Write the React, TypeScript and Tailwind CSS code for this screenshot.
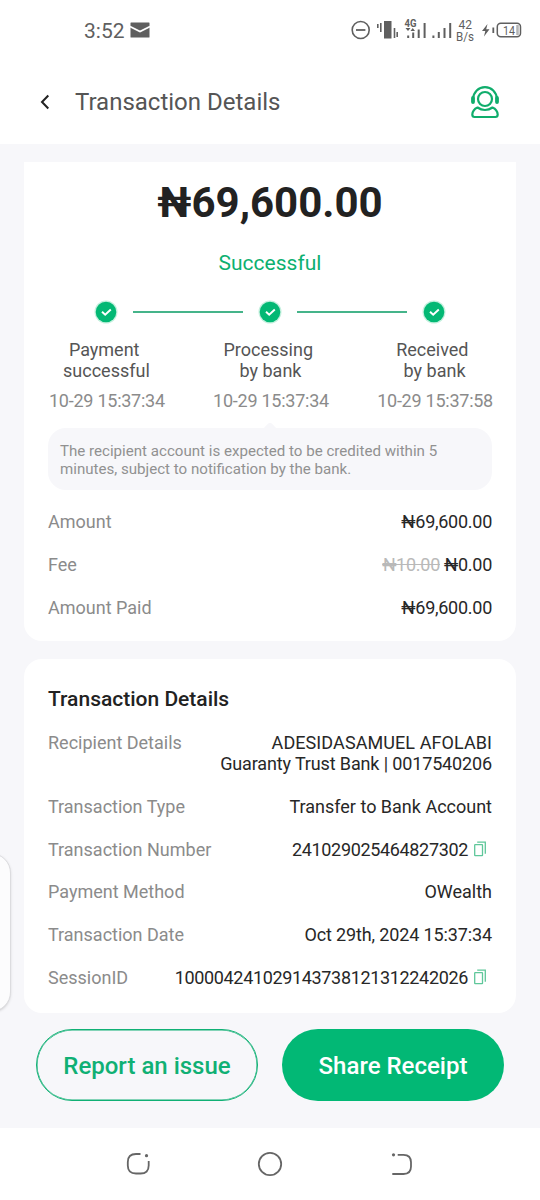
import type { ReactNode } from 'react'

const steps = [
  { label: 'Payment \nsuccessful', time: '10-29 15:37:34' },
  { label: 'Processing \nby bank', time: '10-29 15:37:34' },
  { label: 'Received \nby bank', time: '10-29 15:37:58' },
]

function StatusBar() {
  return (
    <div className="h-[60px] pl-[84px] pr-[18px] flex items-center justify-between text-[#5f5f5f]">
      <div className="flex items-center gap-[5px]">
        <span className="relative top-px text-[21px] leading-6">3:52</span>
        <svg width="20" height="16" viewBox="0 0 20 16">
          <rect x="0.5" y="0.5" width="19" height="15" rx="0.5" fill="#5f5f5f" />
          <path d="M0 4.5l10 5 10-5" fill="none" stroke="#fff" strokeWidth="1.8" />
        </svg>
      </div>
      <svg width="172" height="28" viewBox="350 16 172 28" fill="none" stroke="#5f5f5f" fontFamily="Roboto, sans-serif">
        <circle cx="360.7" cy="30" r="8.5" strokeWidth="1.6" />
        <path d="M356 30h9.4" strokeWidth="1.8" />
        {/* vibrate */}
        <path d="M377.8 24v4M380.8 23v9M394.5 28v10M397.2 32v5" strokeWidth="1.6" />
        <rect x="384" y="21" width="7.5" height="17.5" fill="#5f5f5f" stroke="none" />
        {/* signal */}
        <path d="M408.2 35.5v2.5M413.2 32.5v5.5M418.7 29.5v8.5M424.6 23v15" strokeWidth="2" />
        <path d="M405.5 28h5l-2.5 3zM410.5 31h4.5l-2.25-3z" fill="#5f5f5f" stroke="none" />
        <path d="M433.4 35.5v2.5M438.8 32v6M444.5 28v10M450.2 23v15" strokeWidth="2" />
        <g fill="#5f5f5f" stroke="none">
          <text x="404.5" y="27" fontSize="10.5" fontWeight="700" textLength="12" lengthAdjust="spacingAndGlyphs">4G</text>
          <text x="458.5" y="28.5" fontSize="12">42</text>
          <text x="456" y="40.5" fontSize="12" textLength="18" lengthAdjust="spacingAndGlyphs">B/s</text>
          <path d="M487.5 24l-5.5 7h3.3l-1.3 5.5 5.5-7.3h-3.3z" />
          <text x="503" y="34.5" fontSize="12.5" textLength="12" lengthAdjust="spacingAndGlyphs">14</text>
        </g>
        <path d="M493.3 27.5v5.5" strokeWidth="1.8" />
        <rect x="497.3" y="23.3" width="23.2" height="13.4" rx="3.5" strokeWidth="1.5" />
        <path d="M517.5 25v10" stroke="#b5b5b5" strokeWidth="2.5" />
      </svg>
    </div>
  )
}

function Header() {
  return (
    <header className="h-[84px] pl-10 pr-[39px] flex items-center">
      <svg width="10" height="16" viewBox="0 0 10 16" fill="none" stroke="#222" strokeWidth="2">
        <path d="M8.3 1.5L2 8l6.3 6.5" />
      </svg>
      <h1 className="ml-[25px] text-[24px] leading-7 text-[#555] grow">Transaction Details</h1>
      <svg width="32" height="34" viewBox="0 0 32 34" fill="none" stroke="#10ad6c" strokeWidth="2.2">
        <circle cx="16" cy="14" r="7" />
        <path d="M4 14C4.5 7 9.500 2.200 16 2.200S27.500 7 28 14" />
        <path d="M4 13v4M28 13v4" strokeWidth="3.800" strokeLinecap="round" />
        <path d="M8.500 22.500C5 24 3.500 27 3.300 29.500c0 1.500.7 2.500 2.200 2.500h21c1.500 0 2.200-1 2.200-2.500-.2-2.500-1.700-5.500-5.200-7-4.500 3.200-10.500 3.200-15 0z" strokeLinejoin="round" />
      </svg>
    </header>
  )
}

function CheckIcon() {
  return (
    <svg width="24" height="24" viewBox="0 0 24 24" fill="none">
      <circle cx="12" cy="12" r="11.5" fill="#c4f0de" />
      <circle cx="12" cy="12" r="10.3" fill="#03b874" />
      <path d="M8 11.7l3.2 3.1 5.6-5.3" stroke="#fff" strokeWidth="1.9" />
    </svg>
  )
}

function CopyIcon() {
  return (
    <svg className="ml-[5px] mr-[5px]" width="14" height="16" viewBox="0 0 14 16" fill="none" stroke="#5fc79a" strokeWidth="1.3">
      <rect x="1.7" y="3.7" width="7.8" height="11" rx="0.5" />
      <path d="M4.2 1.2H12.300V12.800" />
    </svg>
  )
}

function Row({ label, children }: { label: string; children: ReactNode }) {
  return (
    <div className="flex justify-between text-[18px] leading-[21px]">
      <span className="text-[#8b8b8b]">{label}</span>
      <div className="flex items-center text-right text-[#272727]">{children}</div>
    </div>
  )
}

function NavBar() {
  return (
    <nav className="h-[72px] bg-white flex items-center justify-between px-[125px]">
      <svg width="26" height="26" viewBox="0 0 26 26" fill="none" stroke="#666" strokeWidth="1.8">
        <path d="M15.5 3H11Q2.8 3 2.8 11v3.5q0 8 8.2 8h4.5q8.2 0 8.2-8V10" />
        <circle cx="21.5" cy="4.7" r="1.6" fill="#666" stroke="none" />
      </svg>
      <svg width="26" height="26" viewBox="0 0 26 26" fill="none" stroke="#666" strokeWidth="1.8">
        <circle cx="13" cy="13" r="11.2" />
      </svg>
      <svg width="26" height="26" viewBox="0 0 26 26" fill="none" stroke="#666" strokeWidth="1.8">
        <path d="M8.7 3.8H14.5q7.5 0 7.5 7.5v4.2q0 7.5-7.5 7.5H3.3" />
        <circle cx="4.5" cy="3.8" r="1.6" fill="#666" stroke="none" />
      </svg>
    </nav>
  )
}

export default function App() {
  return (
    <div className="relative w-[540px] h-[1200px] overflow-hidden flex flex-col bg-[#f7f7fa] font-['Roboto',sans-serif]">
      <div className="bg-white">
        <StatusBar />
        <Header />
      </div>

      <main className="grow px-6 pt-[18px]">
        <section className="h-[479px] px-6 pt-4 bg-white rounded-b-[18px]">
          <div className="text-center text-[42px] leading-[50px] font-bold text-[#222]">₦69,600.00</div>
          <div className="mt-[22px] text-center text-[21px] leading-[26px] text-[#0cb070]">Successful</div>

          <div className="mt-6 flex items-center justify-between px-[46px]">
            <CheckIcon />
            <div className="w-[110px] h-0.5 bg-[#45b48a]" />
            <CheckIcon />
            <div className="w-[110px] h-0.5 bg-[#45b48a]" />
            <CheckIcon />
          </div>

          <div className="mt-[15px] -mr-px flex justify-between text-[18px] leading-[21px]">
            {steps.map((step) => (
              <div key={step.label} className="flex flex-col items-center">
                <div className="whitespace-pre text-center text-[#555]">{step.label}</div>
                <div className="mt-[9px] pl-px tracking-[-0.25px] text-[#8b8b8b]">{step.time}</div>
              </div>
            ))}
          </div>

          <div className="relative mt-[17px] h-[62px] px-3 pt-[14px] rounded-[18px] bg-[#f7f7fa] text-[15.1px] leading-[18px] text-[#919191]">
            <div className="absolute left-1/2 -top-1 -ml-[5px] size-[10px] rotate-45 rounded-[2px] bg-[#f7f7fa]" />
            <p className="relative">
              The recipient account is expected to be credited within 5<br />
              minutes, subject to notification by the bank.
            </p>
          </div>

          <div className="mt-[21px] flex flex-col gap-[21.75px]">
            <Row label="Amount">
              <span className="tracking-[-0.27px]">₦69,600.00</span>
            </Row>
            <Row label="Fee">
              <span className="mr-1 tracking-[-0.27px] line-through text-[#b9b9b9]">₦10.00</span>
              <span className="tracking-[-0.27px]">₦0.00</span>
            </Row>
            <Row label="Amount Paid">
              <span className="tracking-[-0.27px]">₦69,600.00</span>
            </Row>
          </div>
        </section>

        <section className="mt-[18px] h-[354px] px-6 pt-7 bg-white rounded-[18px]">
          <h2 className="text-[21px] leading-6 font-medium text-[#222]">Transaction Details</h2>
          <div className="mt-[21px] flex flex-col gap-[21.75px]">
            <Row label="Recipient Details">
              <div>
                <p className="tracking-[0.08px]">ADESIDASAMUEL AFOLABI</p>
                <p className="tracking-[-0.14px]">Guaranty Trust Bank | 0017540206</p>
              </div>
            </Row>
            <Row label="Transaction Type">Transfer to Bank Account</Row>
            <Row label="Transaction Number">
              <span className="tracking-[-0.34px]">241029025464827302</span>
              <CopyIcon />
            </Row>
            <Row label="Payment Method">OWealth</Row>
            <Row label="Transaction Date">
              <span className="tracking-[-0.13px]">Oct 29th, 2024 15:37:34</span>
            </Row>
            <Row label="SessionID">
              <span className="tracking-[-0.34px]">100004241029143738121312242026</span>
              <CopyIcon />
            </Row>
          </div>
        </section>

        <div className="mt-4 px-3 flex justify-between">
          <button className="w-[222px] h-[72px] pt-0.5 rounded-full border border-[#10b074] shadow-[inset_0_0_0_0.5px_#10b074] text-[24px] font-medium text-[#10b074]">
            Report an issue
          </button>
          <button className="w-[222px] h-[72px] pt-0.5 rounded-full bg-[#02b875] text-[24px] font-medium text-white">
            Share Receipt
          </button>
        </div>
      </main>

      <NavBar />

      {/* edge panel handle */}
      <div className="absolute -left-8 top-[853px] w-[43px] h-[159px] rounded-[20px] border border-[#dcdcdf] bg-[#fcfcfd] shadow-sm" />
    </div>
  )
}
